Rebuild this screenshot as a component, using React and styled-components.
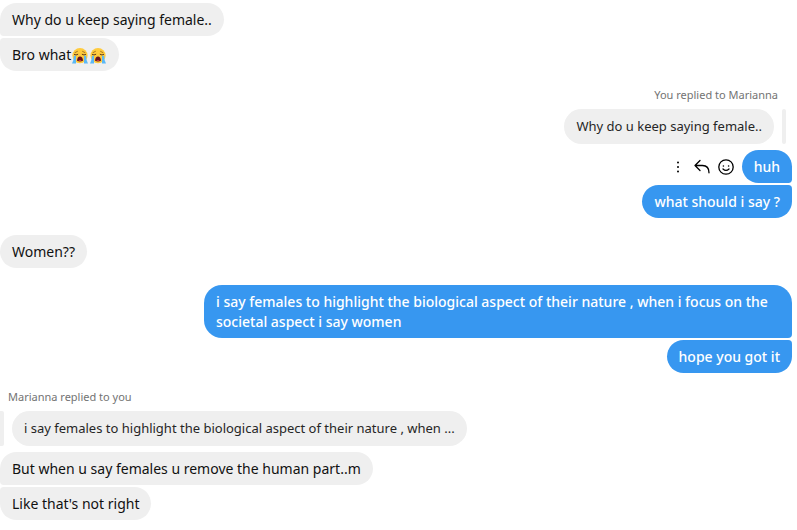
import React from "react";
import styled, { createGlobalStyle } from "styled-components";

const GlobalStyle = createGlobalStyle`
*{
  box-sizing:border-box;
}

body{
  margin:0;
  background-color:#ffffff;
  font-family:"Noto Sans", "Open Sans", sans-serif;
}
`;

const Chat = styled.main`
display:flex;
flex-direction:column;
gap:17px;
padding:3px 5px 10px 0;
`;

const Group = styled.section`
display:flex;
flex-direction:column;
align-items:${(props) => (props.$mine ? "flex-end" : "flex-start")};
gap:2px;
`;

const Row = styled.div`
display:flex;
align-items:center;
gap:8px;
`;

const Bubble = styled.p`
margin:0;
max-width:588px;
padding:7px 12px 6px;
font-size:14px;
line-height:20px;
font-weight:${(props) => (props.$mine ? 500 : 400)};
color:${(props) => (props.$mine ? "#ffffff" : "#111111")};
background-color:${(props) => (props.$mine ? "#3797f0" : "#efefef")};
border-radius:18px;

${(props) => props.$mine && props.$joinTop && "border-top-right-radius:4px;"}
${(props) => props.$mine && props.$joinBottom && "border-bottom-right-radius:4px;"}
${(props) => !props.$mine && props.$joinTop && "border-top-left-radius:4px;"}
${(props) => !props.$mine && props.$joinBottom && "border-bottom-left-radius:4px;"}
`;

const ReplyLabel = styled.p`
margin:0;
padding:${(props) => (props.$mine ? "0 14px 2px 0" : "0 0 2px 8px")};
font-size:11px;
line-height:13px;
color:#737373;
`;

const QuoteRow = styled.div`
display:flex;
flex-direction:${(props) => (props.$mine ? "row" : "row-reverse")};
gap:8px;
margin:4px 0;
padding-right:${(props) => (props.$mine ? "6px" : "0")};
`;

const Quote = styled.blockquote`
margin:0;
padding:7px 12px 8px;
font-size:13px;
line-height:20px;
color:#262626;
background-color:#efefef;
border-radius:18px;
`;

const QuoteBar = styled.span`
width:4px;
background-color:#efefef;
border-radius:${(props) => (props.$mine ? "2px" : "0 2px 2px 0")};
`;

const Actions = styled.div`
display:flex;
align-items:center;
gap:8px;
`;

const IconButton = styled.button`
display:flex;
padding:0;
border:none;
background:none;
color:#000000;
cursor:pointer;
`;

const EmojiIcon = styled.svg`
width:18px;
height:18px;
vertical-align:-5px;
`;

const CryingFace = () => (
  <EmojiIcon viewBox="0 0 18 18" role="img" aria-label="Loudly crying face">
    <circle cx="9" cy="8.6" r="7.6" fill="#ffcb3d" />
    <path d="M6.4 4.4L4 5.6M11.6 4.4L14 5.6" stroke="#8b5a1c" strokeWidth=".8" strokeLinecap="round" />
    <path d="M3.4 7.6Q5 8.6 6.8 7.4M11.2 7.4Q13 8.6 14.6 7.6" fill="none" stroke="#5c381b" strokeWidth="1" strokeLinecap="round" />
    <path d="M3 8.8H5V16.4H1Q2.8 13.6 3 8.8ZM13 8.8H15Q15.2 13.6 17 16.4H13Z" fill="#5bb8f5" />
    <path d="M6 13.8C6 8 12 8 12 13.8Q9 15 6 13.8Z" fill="#65121f" />
    <path d="M7.2 13.6Q9 12.2 10.8 13.6Q9 14.2 7.2 13.6Z" fill="#e94452" />
  </EmojiIcon>
);

const MessageActions = () => (
  <Actions>
    <IconButton aria-label="More">
      <svg width="16" height="16" viewBox="0 0 16 16" fill="currentColor">
        <circle cx="8" cy="3.5" r="1" />
        <circle cx="8" cy="8" r="1" />
        <circle cx="8" cy="12.5" r="1" />
      </svg>
    </IconButton>
    <IconButton aria-label="Reply">
      <svg width="16" height="16" viewBox="0 0 16 16" fill="none" stroke="currentColor" strokeWidth="1.3" strokeLinecap="round" strokeLinejoin="round">
        <path d="M6 1.5L1 6.5L6 11.5M1 6.5H8.5C12.5 6.5 15 9 15 13.8" />
      </svg>
    </IconButton>
    <IconButton aria-label="React">
      <svg width="16" height="16" viewBox="0 0 16 16" fill="none" stroke="currentColor" strokeWidth="1.3" strokeLinecap="round">
        <circle cx="8" cy="8" r="7.2" />
        <path d="M5 10Q8 12.8 11 10" />
        <circle cx="5.4" cy="7" r=".8" fill="currentColor" stroke="none" />
        <circle cx="10.6" cy="7" r=".8" fill="currentColor" stroke="none" />
      </svg>
    </IconButton>
  </Actions>
);

const App = () => {
  return (
    <>
      <GlobalStyle />
      <Chat>
        <Group>
          <Bubble $joinBottom>Why do u keep saying female..</Bubble>
          <Bubble $joinTop>
            Bro what
            <CryingFace />
            <CryingFace />
          </Bubble>
        </Group>

        <Group $mine>
          <ReplyLabel $mine>You replied to Marianna</ReplyLabel>
          <QuoteRow $mine>
            <Quote>Why do u keep saying female..</Quote>
            <QuoteBar $mine />
          </QuoteRow>
          <Row>
            <MessageActions />
            <Bubble $mine $joinBottom>huh</Bubble>
          </Row>
          <Bubble $mine $joinTop>what should i say ?</Bubble>
        </Group>

        <Group>
          <Bubble>Women??</Bubble>
        </Group>

        <Group $mine>
          <Bubble $mine $joinBottom>
            i say females to highlight the biological aspect of their nature , when i focus on the
            societal aspect i say women
          </Bubble>
          <Bubble $mine $joinTop>hope you got it</Bubble>
        </Group>

        <Group>
          <ReplyLabel>Marianna replied to you</ReplyLabel>
          <QuoteRow>
            <Quote>i say females to highlight the biological aspect of their nature , when ...</Quote>
            <QuoteBar />
          </QuoteRow>
          <Bubble $joinBottom>But when u say females u remove the human part..m</Bubble>
          <Bubble $joinTop>Like that's not right</Bubble>
        </Group>
      </Chat>
    </>
  );
};

export default App;
